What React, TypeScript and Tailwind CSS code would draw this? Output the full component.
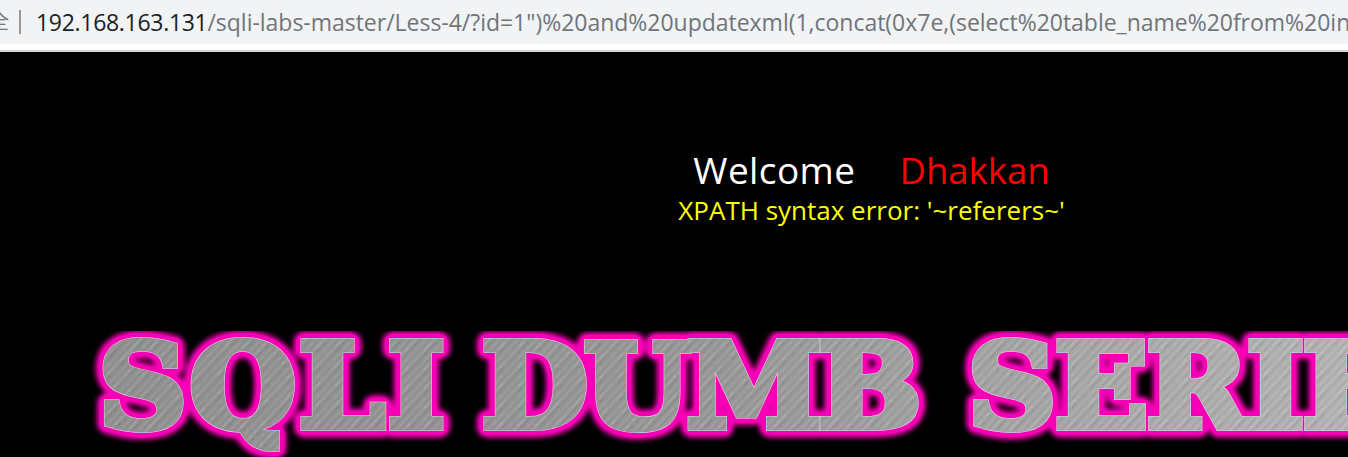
export default function App() {
  const url = '/sqli-labs-master/Less-4/?id=1")%20and%20updatexml(1,concat(0x7e,(select%20table_name%20from%20information_schema.tables))'
  const textProps = { y: 96, fontFamily: "'DejaVu Serif', serif", fontWeight: 700, fontSize: 116, transform: 'scale(1.05 1)' }

  // words are placed one by one, the banner has tighter gaps than the font
  const words = (
    <>
      <tspan x={94} letterSpacing={3}>SQLI</tspan>
      <tspan x={459} letterSpacing={-3.3}>DUMB</tspan>
      <tspan x={922} letterSpacing={-1}>SERIES</tspan>
    </>
  )

  return (
    <div className="w-[1348px] h-[457px] overflow-hidden flex flex-col bg-black font-['Open_Sans','Noto_Sans_CJK_SC',sans-serif]">
      {/* Address bar */}
      <div className="h-[44px] shrink-0 bg-[#f1f3f4] flex items-center overflow-hidden whitespace-nowrap">
        <span className="text-[20px] leading-none text-[#777] ml-[-11px] w-[20px] shrink-0">全</span>
        <div className="w-[2px] h-[24px] bg-[#999] ml-[10px] shrink-0" />
        <div className="ml-[15px] text-[23px] text-[#70757a] tracking-[-0.02px]">
          <span className="text-[#202124] tracking-[-0.3px]">192.168.163.131</span>
          {url}
        </div>
      </div>
      <div className="h-[8px] shrink-0 bg-white border-b-[2px] border-[#d5d5d5]" />

      {/* Page */}
      <div className="w-[1743px] h-[279px] shrink-0 flex flex-col items-center pt-[93px]">
        <div className="flex gap-[44px] leading-[50px] h-[50px]">
          <span className="text-white text-[37px] tracking-[0.4px]">Welcome</span>
          <span className="text-[#ff0000] text-[36.5px]">Dhakkan</span>
        </div>
        <div className="text-[#ffff00] text-[26px] leading-[34px] mt-[-2px]">XPATH syntax error: '~referers~'</div>
      </div>

      {/* Banner */}
      <svg width="1348" height="126" className="block shrink-0">
        <defs>
          <linearGradient id="metal" gradientUnits="userSpaceOnUse" x1="0" y1="0" x2="1348" y2="0">
            <stop offset="0" stopColor="#8f8f8f" />
            <stop offset="0.5" stopColor="#979797" />
            <stop offset="1" stopColor="#b6b6b6" />
          </linearGradient>
          <pattern id="brush" width="13" height="13" patternUnits="userSpaceOnUse" patternTransform="rotate(-48)">
            <rect width="13" height="2" fill="#ffffff" opacity="0.08" />
            <rect y="3.5" width="13" height="1.5" fill="#444444" opacity="0.1" />
            <rect y="8" width="13" height="1" fill="#ffffff" opacity="0.07" />
            <rect y="10.5" width="13" height="1" fill="#7a6a60" opacity="0.12" />
          </pattern>
          <filter id="glow" x="-5%" y="-30%" width="110%" height="160%">
            <feGaussianBlur stdDeviation="2.5" />
          </filter>
          <filter id="soft" x="-2%" y="-5%" width="104%" height="110%">
            <feGaussianBlur stdDeviation="0.5" />
          </filter>
        </defs>
        <text {...textProps} fill="#ff00bb" stroke="#ff00bb" strokeWidth="21" strokeLinejoin="round" filter="url(#glow)">{words}</text>
        <text {...textProps} fill="#ff00bb" stroke="#f500b4" strokeWidth="16" strokeLinejoin="round">{words}</text>
        <text {...textProps} fill="#eadbe6" stroke="#eadbe6" strokeWidth="8">{words}</text>
        <text {...textProps} fill="url(#metal)" stroke="url(#metal)" strokeWidth="7">{words}</text>
        <text {...textProps} fill="url(#brush)" stroke="url(#brush)" strokeWidth="7" filter="url(#soft)">{words}</text>
      </svg>
    </div>
  )
}
